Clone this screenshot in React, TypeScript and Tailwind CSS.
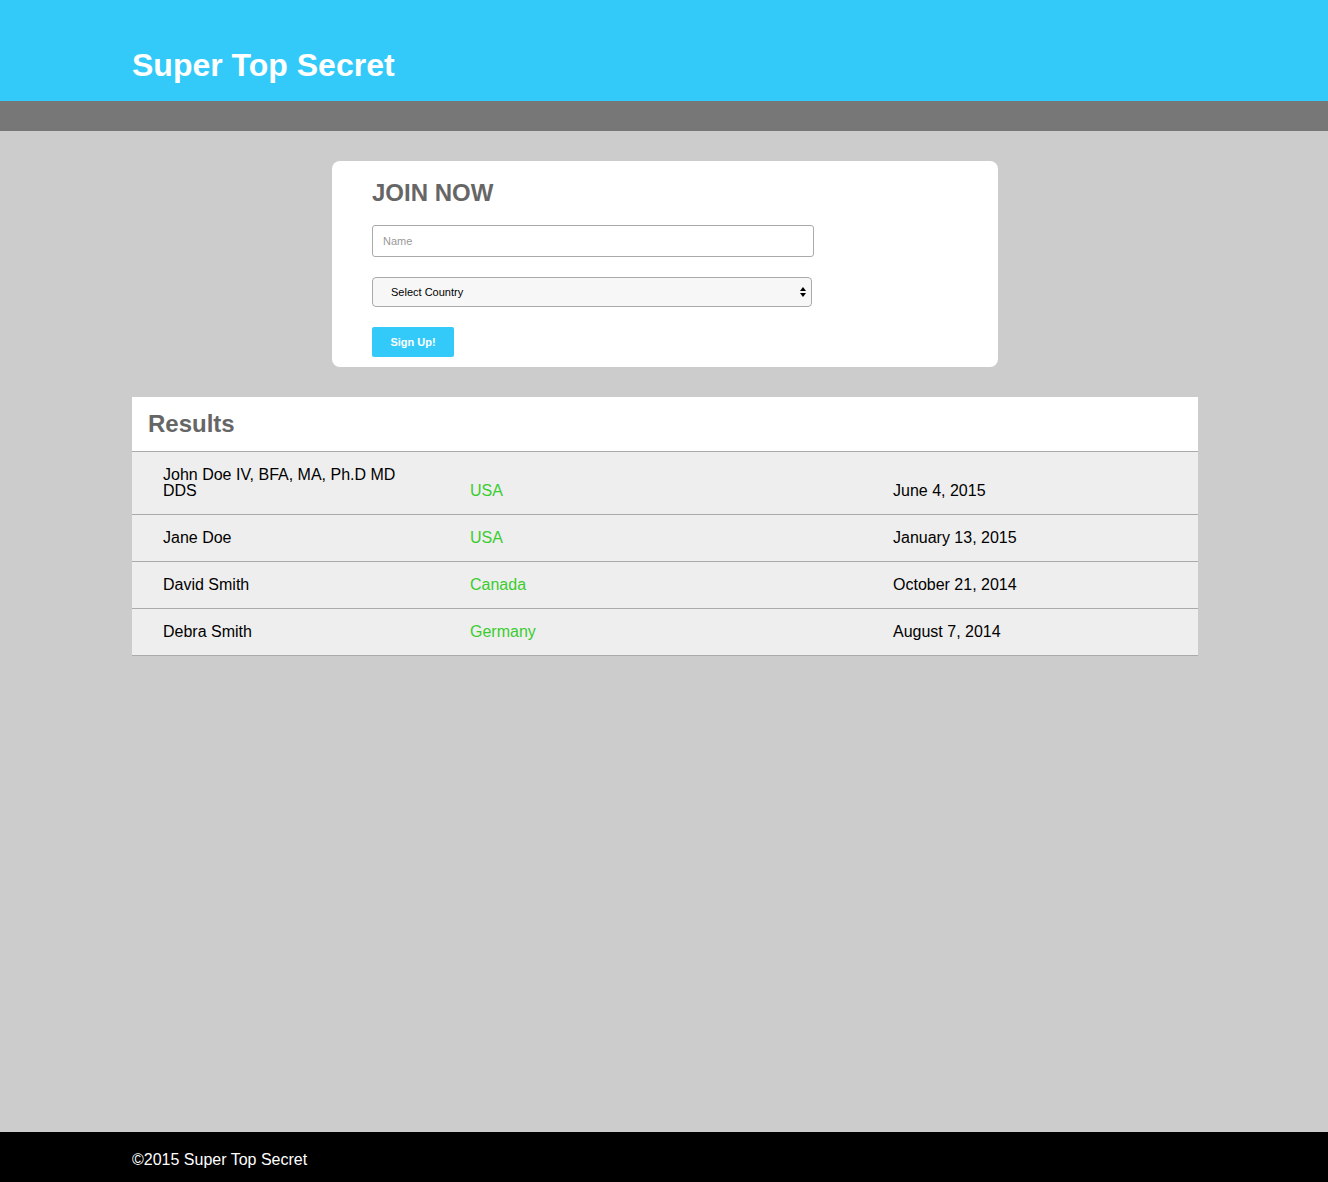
import React from "react";

const rows = [
  { name: "John Doe IV, BFA, MA, Ph.D MD DDS", country: "USA", date: "June 4, 2015" },
  { name: "Jane Doe", country: "USA", date: "January 13, 2015" },
  { name: "David Smith", country: "Canada", date: "October 21, 2014" },
  { name: "Debra Smith", country: "Germany", date: "August 7, 2014" },
];

const App: React.FC = () => {
  return (
    <div className="min-h-screen flex flex-col bg-[#cccccc] font-['Liberation_Sans',Arial,sans-serif]">
      {/* Header */}
      <header className="bg-[#33cafa] h-[101px] pl-[2px]">
        <div className="w-[1066px] mx-auto pt-[47px]">
          <h1 className="text-[32px] font-bold text-white leading-[normal]">Super Top Secret</h1>
        </div>
      </header>
      <div className="bg-[#777777] h-[30px]"></div>

      <main className="flex-1 pt-[30px] pb-[30px] pl-[2px]">
        {/* Join form */}
        <section className="w-[666px] mx-auto bg-white rounded-lg pl-10 pt-[18px] pb-[10px]">
          <h2 className="text-[24px] font-bold text-[#666666] leading-[normal]">JOIN NOW</h2>
          <form className="flex flex-col items-start mt-[18px]" onSubmit={(e) => e.preventDefault()}>
            <input
              type="text"
              placeholder="Name"
              className="w-[442px] h-[32px] border border-[#aaaaaa] rounded-[3px] pl-[10px] text-[11px] text-black placeholder:text-[#999999] outline-none"
            />
            <div className="relative mt-[20px]">
              <select className="appearance-none w-[440px] h-[30px] border border-[#aaaaaa] rounded-[4px] bg-[#f7f7f7] pl-[18px] text-[11px] text-black outline-none">
                <option>Select Country</option>
                <option>USA</option>
                <option>Canada</option>
                <option>Germany</option>
              </select>
              <svg
                className="absolute right-[6px] top-[10px] pointer-events-none"
                width="6"
                height="10"
                viewBox="0 0 6 10"
              >
                <path d="M3 0 L6 4 L0 4 Z" fill="#000" />
                <path d="M3 10 L6 6 L0 6 Z" fill="#000" />
              </svg>
            </div>
            <button
              type="submit"
              className="mt-[20px] w-[82px] h-[30px] bg-[#33cafa] rounded-[2px] text-white text-[11px] font-bold"
            >
              Sign Up!
            </button>
          </form>
        </section>

        {/* Results */}
        <section className="w-[1066px] mx-auto mt-[30px]">
          <div className="bg-white pl-4 pt-[13px] pb-[13px] border-b border-[#aaaaaa]">
            <h2 className="text-[24px] font-bold text-[#666666] leading-[normal]">Results</h2>
          </div>
          {rows.map((r) => (
            <div
              key={r.name}
              className="grid grid-cols-[338px_423px_1fr] items-end bg-[#eeeeee] border-b border-[#aaaaaa] py-[15px] text-[16px] leading-[16px] text-black"
            >
              <div className="pl-[31px] pr-[57px]">{r.name}</div>
              <div className="text-[#3acc2f]">{r.country}</div>
              <div>{r.date}</div>
            </div>
          ))}
        </section>
      </main>

      {/* Footer */}
      <footer className="bg-black h-[50px] pl-[2px]">
        <div className="w-[1066px] mx-auto pt-[19px] text-white text-[16px] leading-[normal]">
          ©2015 Super Top Secret
        </div>
      </footer>
    </div>
  );
};

export default App;
